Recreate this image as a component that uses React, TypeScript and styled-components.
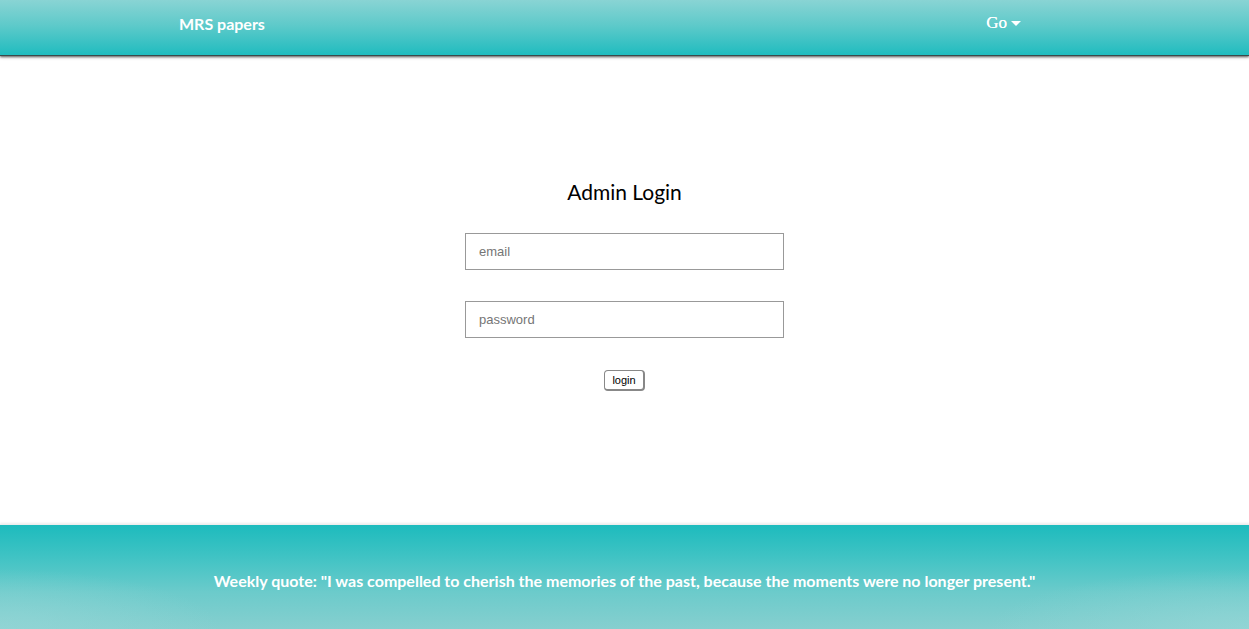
import React from "react";
import styled, { createGlobalStyle } from "styled-components";

const Global = createGlobalStyle`
  html, body { margin: 0; padding: 0; background: #fff; }
  body { font-family: "Lato", "Open Sans", sans-serif; }
`;

const Page = styled.div`
  display: flex;
  flex-direction: column;
  min-height: 629px;
  overflow: hidden;
`;

const Header = styled.header`
  position: relative;
  z-index: 1;
  height: 55px;
  display: flex;
  align-items: center;
  justify-content: space-between;
  padding: 0 227px 0 179px;
  background: linear-gradient(to bottom, #89d4d4 0%, #5fcaca 45%, #20bcbf 100%);
  box-shadow: 0 1px 0 #3b4a4a, 0 2px 2px rgba(0, 0, 0, 0.55), 0 3px 3px rgba(0, 0, 0, 0.15);
`;

const Brand = styled.span`
  color: #fff;
  font-family: "Lato", sans-serif;
  font-weight: 700;
  font-size: 16px;
  margin-top: -9px;
`;

const Menu = styled.span`
  display: flex;
  align-items: center;
  gap: 4px;
  color: #fff;
  font-family: "Liberation Serif", serif;
  font-size: 17px;
  margin-top: -9px;
  margin-right: 1px;
  text-shadow: 0 0 0.4px #fff;
`;

const Caret = styled.span`
  width: 0;
  height: 0;
  border-left: 5px solid transparent;
  border-right: 5px solid transparent;
  border-top: 5px solid #fff;
  margin-top: 1px;
`;

const Main = styled.main`
  height: 469px;
  display: flex;
  flex-direction: column;
  align-items: center;
  padding-top: 124px;
  box-sizing: border-box;
`;

const Title = styled.h2`
  margin: 0 0 28px;
  font-family: "Lato", sans-serif;
  font-weight: 400;
  font-size: 21px;
  line-height: 26px;
  color: #000;
`;

const Form = styled.form`
  display: flex;
  flex-direction: column;
  align-items: center;
  gap: 31px;
`;

const Input = styled.input`
  width: 319px;
  height: 37px;
  box-sizing: border-box;
  border: 1px solid #999;
  padding: 0 13px;
  font-family: "Liberation Sans", Arial, sans-serif;
  font-size: 13px;
  color: #333;
  outline: none;
  &::placeholder { color: #757575; }
`;

const Button = styled.button`
  margin-top: 1px;
  height: 21px;
  width: 41px;
  padding: 0;
  box-sizing: border-box;
  background: #fff;
  border: 1px solid #888;
  border-bottom-width: 2px;
  border-right-width: 2px;
  border-radius: 4px;
  font-family: "Liberation Sans", Arial, sans-serif;
  font-size: 11px;
  color: #000;
`;

const Footer = styled.footer`
  flex: 1;
  height: 105px;
  display: flex;
  align-items: center;
  justify-content: center;
  border-top: 1px solid #ededed;
  box-shadow: 0 -1px 2px rgba(0, 0, 0, 0.08);
  background:
    radial-gradient(ellipse 220px 60px at 0% 100%, rgba(150, 215, 215, 0.7), rgba(150, 215, 215, 0)),
    radial-gradient(ellipse 260px 60px at 100% 100%, rgba(150, 215, 215, 0.7), rgba(150, 215, 215, 0)),
    linear-gradient(to bottom, #1dbbbd 0%, #3fc3c4 30%, #6ccbcb 65%, #86cfcf 100%);
`;

const Quote = styled.p`
  margin: 6px 0 0;
  color: #fff;
  font-family: "Lato", sans-serif;
  font-weight: 700;
  font-size: 16px;
`;

export default function App() {
  return (
    <>
      <Global />
      <Page>
        <Header>
          <Brand>MRS papers</Brand>
          <Menu>
            Go
            <Caret />
          </Menu>
        </Header>
        <Main>
          <Title>Admin Login</Title>
          <Form onSubmit={(e) => e.preventDefault()}>
            <Input type="email" placeholder="email" />
            <Input type="password" placeholder="password" />
            <Button type="submit">login</Button>
          </Form>
        </Main>
        <Footer>
          <Quote>
            Weekly quote: "I was compelled to cherish the memories of the past, because the moments were no longer present."
          </Quote>
        </Footer>
      </Page>
    </>
  );
}
